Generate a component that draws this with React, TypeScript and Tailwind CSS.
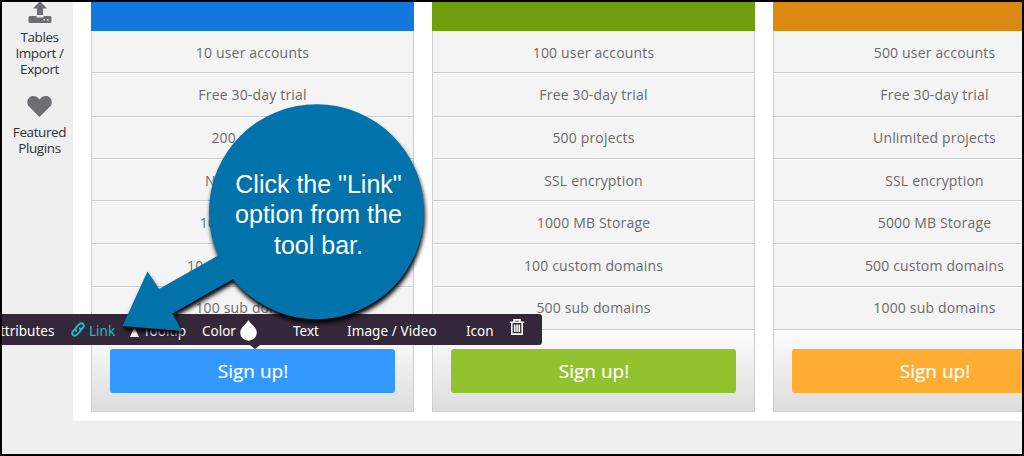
import React from 'react'
import clsx from 'clsx'

interface Plan {
  id: string;
  header: string;
  button: string;
  features: string[];
}

const plans: Plan[] = [
  {
    id: 'basic',
    header: 'bg-[#1278de]',
    button: 'bg-[#3399ff]',
    features: ['10 user accounts', 'Free 30-day trial', '200 projects', 'No encryption', '100 MB Storage', '10 custom domains', '100 sub domains'],
  },
  {
    id: 'pro',
    header: 'bg-[#6f9f0c]',
    button: 'bg-[#92c22e]',
    features: ['100 user accounts', 'Free 30-day trial', '500 projects', 'SSL encryption', '1000 MB Storage', '100 custom domains', '500 sub domains'],
  },
  {
    id: 'premium',
    header: 'bg-[#da8a12]',
    button: 'bg-[#ffad33]',
    features: ['500 user accounts', 'Free 30-day trial', 'Unlimited projects', 'SSL encryption', '5000 MB Storage', '500 custom domains', '1000 sub domains'],
  },
];

const rowHeights = [
  'h-[42px] leading-[43px]',
  'h-[44px] leading-[43px]',
  'h-[42px] leading-[41px]',
  'h-[42px] leading-[43px]',
  'h-[43px] leading-[43px]',
  'h-[43px] leading-[43px]',
  'h-[43px] leading-[41px]',
];

const PlanCard = ({ plan }: { plan: Plan }) => (
  <div className="w-[323px] shrink-0">
    <div className={clsx('h-[31px]', plan.header)} />
    <div className="h-[381px] border-x border-b border-[#cfcfcf] bg-[#f4f4f4]">
      {plan.features.map((feature, i) => (
        <div
          key={i}
          className={clsx(
            'border-b border-[#cdcdcd] text-center text-[14px] tracking-[0.17px] text-[#6b6b6b] shadow-[0_1px_0_#fff]',
            rowHeights[i],
          )}
        >
          {feature}
        </div>
      ))}
      <div className="h-[81px] bg-linear-to-b from-[#fdfdfd] to-[#dddddd] px-[18px] pt-[19px]">
        <button className={clsx('block h-11 w-full rounded-[3px] pl-[1px] text-[19px] leading-[44px] text-white [-webkit-text-stroke:0.2px_white]', plan.button)}>
          Sign up!
        </button>
      </div>
    </div>
  </div>
);

const Sidebar = () => (
  <aside className="flex w-[73px] shrink-0 flex-col items-center pl-[6px] text-center text-[13.5px] leading-4 tracking-[-0.4px] text-[#303236]">
    <svg className="h-6 w-6" viewBox="0 0 24 24" fill="#6c6e73">
      <path d="M12 1 19 8.5H15V15H9V8.5H5Z" />
      <path fillRule="evenodd" d="M2 16H8.5V17.5H15.5V16H22A1.5 1.5 0 0 1 23.5 17.5V21.5A1.5 1.5 0 0 1 22 23H2A1.5 1.5 0 0 1 .5 21.5V17.5A1.5 1.5 0 0 1 2 16ZM15.5 19V20.5H17V19ZM19 19V20.5H20.5V19Z" />
    </svg>
    <div className="mt-[5px]">
      Tables
      <br />
      Import /
      <br />
      Export
    </div>
    <svg className="mt-[19px] h-[21px] w-[25px]" viewBox="0 0 25 21" fill="#6c6e73">
      <path d="M12.5 21 2 10.6C-.5 8-.2 3.7 2.3 1.5 5.2-.9 9.2 0 11.3 2.3L12.5 3.6 13.7 2.3C15.8 0 19.8-.9 22.7 1.5 25.2 3.7 25.5 8 23 10.6Z" />
    </svg>
    <div className="mt-[7px]">
      Featured
      <br />
      Plugins
    </div>
  </aside>
);

const Toolbar = () => (
  <div className="absolute top-[314px] left-0 flex h-[31px] w-[542px] rounded-r-[3px] bg-[#35273a] font-['Noto_Sans'] text-[13.5px] leading-[34px] whitespace-nowrap text-white">
    <span className="w-[71px]">ttributes</span>
    <span className="flex w-[59px] text-[#1dbccd]">
      <svg className="mt-2 mr-1 h-[15px] w-[14px]" viewBox="0 0 14 15" fill="none" stroke="currentColor" strokeWidth="1.9" strokeLinecap="round">
        <path d="M5.2 8.8C4.1 7.4 4.3 6.3 5.2 5.3L8.3 2.1C9.4 1 11 1 12 2S13 4.6 12 5.7L10.2 7.6" />
        <path d="M8.8 6.2C9.9 7.6 9.7 8.7 8.8 9.7L5.7 12.9C4.6 14 3 14 2 13S1 10.4 2 9.3L3.8 7.4" />
      </svg>
      Link
    </span>
    <span className="flex w-[72px]">
      <svg className="mt-[13px] mr-1 h-[10px] w-[9px]" viewBox="0 0 9 10" fill="currentColor">
        <path d="M4.5 0 9 10H0Z" />
      </svg>
      Tooltip
    </span>
    <span className="flex w-[91px]">
      <span className="w-[38px]">Color</span>
      <svg className="mt-[6px] h-[21px] w-[17px]" viewBox="0 0 17 21" fill="currentColor">
        <path d="M8.5 0C10 3.5 16.8 7.5 16.8 12.5A8.3 8.2 0 0 1 .2 12.5C.2 7.5 7 3.5 8.5 0Z" />
      </svg>
    </span>
    <span className="w-[54px]">Text</span>
    <span className="w-[119px] tracking-[0.1px]">Image / Video</span>
    <span className="w-[43px]">Icon</span>
    <svg className="mt-[5px] h-4 w-[16px]" viewBox="0 0 16 16" fill="none" stroke="currentColor" strokeWidth="1.6">
      <path d="M.8 3.3H15.2M5 3V.9H11V3M2.8 3.5V15.1H13.2V3.5M5.7 5.5V13M8 5.5V13M10.3 5.5V13" />
    </svg>
    <svg className="absolute top-[31px] left-[250px] h-[4px] w-[10px]" viewBox="0 0 10 4" fill="#35273a">
      <path d="M0 0H10L5 4Z" />
    </svg>
  </div>
);

const Callout = () => (
  <div className="absolute top-[90px] left-[100px] h-[250px] w-[340px]">
    <svg className="h-full w-full overflow-visible drop-shadow-[1px_4px_2px_rgba(0,0,0,1)]" viewBox="0 0 340 250" fill="#0272ab">
      <circle cx="216.5" cy="121.7" r="107.5" />
      <path d="M119 165 59 199 47.5 181.5 22.5 236 82 241 72.5 223.5 134 188.5Z" />
    </svg>
    <p className="absolute top-[79px] left-[118px] w-[201px] text-center font-['Liberation_Sans'] text-[25px] leading-[30.3px] text-white">
      Click the "Link"
      <br />
      option from the
      <br />
      tool bar.
    </p>
  </div>
);

const App = () => {
  return (
    <div className="relative h-[456px] w-[1024px] overflow-hidden bg-[#efefef] font-['Open_Sans',sans-serif]">
      <div className="flex h-[421px]">
        <Sidebar />
        <main className="flex min-w-0 flex-1 gap-[18px] overflow-hidden bg-white pl-[18px]">
          {plans.map((plan) => (
            <PlanCard key={plan.id} plan={plan} />
          ))}
        </main>
      </div>
      <Toolbar />
      <Callout />
      <div className="pointer-events-none absolute inset-0 border-2 border-black" />
    </div>
  )
}

export default App
